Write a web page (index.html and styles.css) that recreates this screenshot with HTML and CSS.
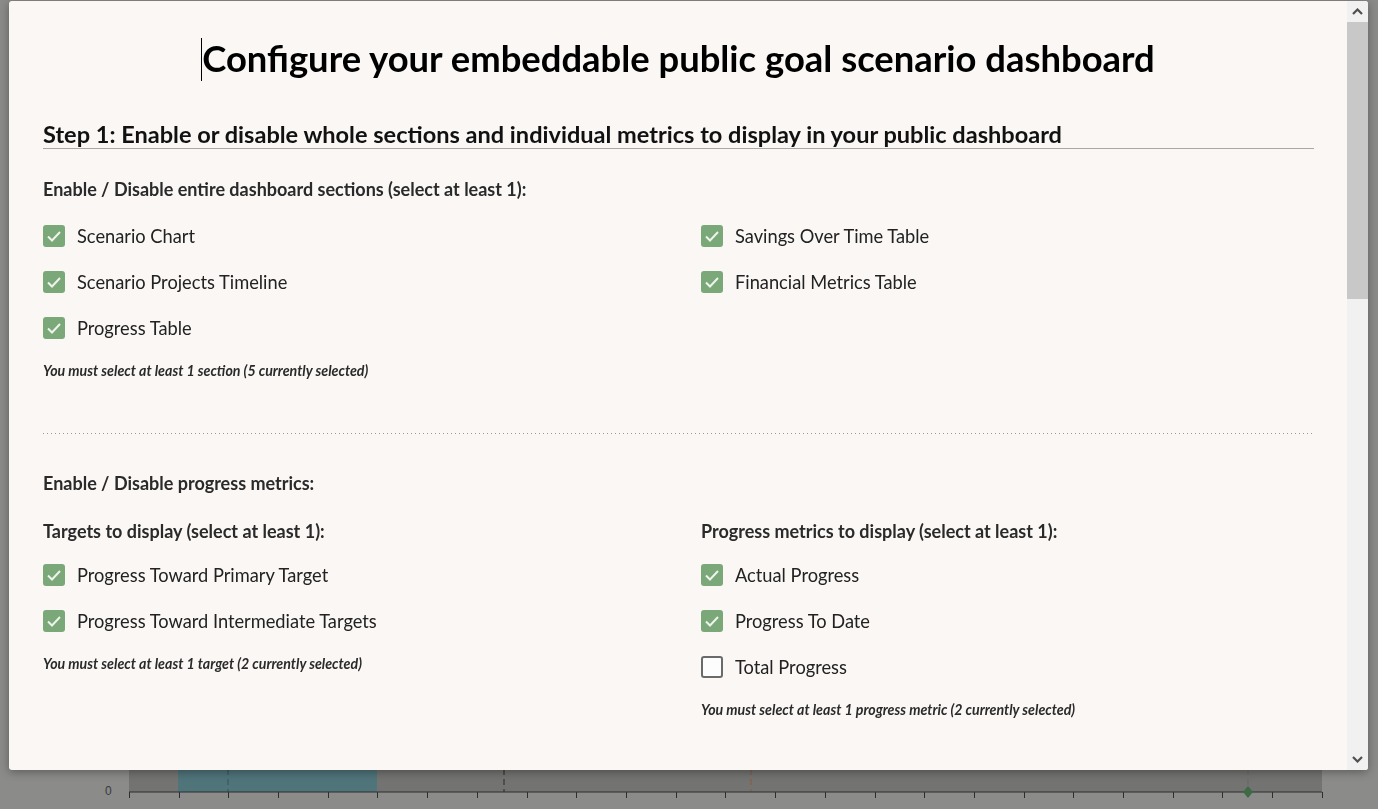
FILE: index.html
```html
<!DOCTYPE html>
<html>
<head>
  <title>Configure public dashboard</title>
  <link rel="stylesheet" href="styles.css">
</head>
<body>

<div class="page">
  <svg class="chart" width="1378" height="60" viewBox="0 0 1378 60">
    <rect x="0" y="0" width="1378" height="60" fill="#8b8b8a"/>
    <rect x="129" y="0" width="1193" height="43" fill="#737372"/>
    <rect x="178" y="0" width="199" height="43" fill="#4f747a"/>
    <line x1="228" y1="0" x2="228" y2="43" stroke="#3f5f64" stroke-width="1.5" stroke-dasharray="6 4"/>
    <line x1="504" y1="0" x2="504" y2="43" stroke="#2a2a2a" stroke-width="1" stroke-dasharray="6 4"/>
    <line x1="751" y1="0" x2="751" y2="43" stroke="#8c5a3c" stroke-width="1" stroke-dasharray="6 4"/>
    <line x1="1248" y1="0" x2="1248" y2="43" stroke="#686868" stroke-width="1" stroke-dasharray="6 4"/>
    <line x1="129" y1="43" x2="1322" y2="43" stroke="#2e2e2e" stroke-width="1.2"/>
    <g id="ticks" stroke="#2e2e2e" stroke-width="1"></g>
    <polygon points="1248,37 1253,43 1248,49 1243,43" fill="#3e6b45"/>
    <text x="105" y="46" font-family="Liberation Sans, sans-serif" font-size="12" fill="#3a3a3a">0</text>
  </svg>
</div>

<div class="modal">
  <div class="content">
    <h1><span class="caret"></span>Configure your embeddable public goal scenario dashboard</h1>

    <h2>Step 1: Enable or disable whole sections and individual metrics to display in your public dashboard</h2>

    <div class="label">Enable / Disable entire dashboard sections (select at least 1):</div>
    <div class="cols rows-top">
      <div>
        <div class="check on">Scenario Chart</div>
        <div class="check on">Scenario Projects Timeline</div>
        <div class="check on">Progress Table</div>
        <div class="note">You must select at least 1 section (5 currently selected)</div>
      </div>
      <div>
        <div class="check on">Savings Over Time Table</div>
        <div class="check on">Financial Metrics Table</div>
      </div>
    </div>

    <div class="dotted"></div>

    <div class="label metrics">Enable / Disable progress metrics:</div>
    <div class="cols">
      <div>
        <div class="label sub">Targets to display (select at least 1):</div>
        <div class="group">
          <div class="check on">Progress Toward Primary Target</div>
          <div class="check on">Progress Toward Intermediate Targets</div>
        </div>
        <div class="note">You must select at least 1 target (2 currently selected)</div>
      </div>
      <div>
        <div class="label sub">Progress metrics to display (select at least 1):</div>
        <div class="group">
          <div class="check on">Actual Progress</div>
          <div class="check on">Progress To Date</div>
          <div class="check">Total Progress</div>
        </div>
        <div class="note">You must select at least 1 progress metric (2 currently selected)</div>
      </div>
    </div>
  </div>

  <div class="scrollbar">
    <div class="arrow"><svg width="11" height="7" viewBox="0 0 11 7"><polyline points="1,6 5.5,1.5 10,6" fill="none" stroke="#505050" stroke-width="2.2"/></svg></div>
    <div class="thumb"></div>
    <div class="track"></div>
    <div class="arrow"><svg width="11" height="7" viewBox="0 0 11 7"><polyline points="1,1 5.5,5.5 10,1" fill="none" stroke="#505050" stroke-width="2.2"/></svg></div>
  </div>
</div>

<script>
  const ticks = document.getElementById('ticks');
  for (let x = 129; x <= 1323; x += 49.7) {
    const t = document.createElementNS('http://www.w3.org/2000/svg', 'line');
    t.setAttribute('x1', Math.round(x) + 0.5);
    t.setAttribute('x2', Math.round(x) + 0.5);
    t.setAttribute('y1', 43);
    t.setAttribute('y2', 49);
    ticks.appendChild(t);
  }

  const tick = '<svg width="22" height="22" viewBox="0 0 22 22"><polyline points="5,11.5 9,15.5 17,7" fill="none" stroke="#eef3ec" stroke-width="2"/></svg>';
  document.querySelectorAll('.check').forEach(el => {
    const box = document.createElement('span');
    box.className = 'box';
    if (el.classList.contains('on')) box.innerHTML = tick;
    el.prepend(box);
  });
</script>

</body>
</html>
```

FILE: styles.css
```css
html, body { margin: 0; height: 100%; overflow: hidden; }
body { background: #8b8b8a; font-family: Lato, "Open Sans", sans-serif; }

.page { height: 100vh; display: flex; flex-direction: column; justify-content: flex-end; }
.chart { display: block; }

.modal { position: fixed; left: 9px; top: 1px; width: 1359px; height: 769px; background: #faf7f5; border-radius: 3px; box-shadow: 0 2px 10px rgba(0,0,0,0.35); display: flex; overflow: hidden; }
.content { flex: 1; padding: 0 33px 0 34px; color: #222; }

h1 { margin: 35px 0 0; font-size: 36.4px; line-height: 44px; font-weight: 700; text-align: center; color: #000; }
.caret { display: inline-block; width: 1px; height: 43px; background: #000; vertical-align: -9px; margin-left: -1px; }

h2 { margin: 39px 0 0; font-size: 23.55px; line-height: 28px; font-weight: 700; color: #111; border-bottom: 1px solid #a8a8a8; }

.label { margin-top: 28px; font-size: 18px; line-height: 24px; font-weight: 700; color: #2a2a2a; }
.label.metrics { margin-top: 37px; }
.label.sub { margin-top: 24px; }

.cols { display: grid; grid-template-columns: 1fr 1fr; column-gap: 45px; }
.rows-top { margin-top: 12px; }
.group { margin-top: 9px; }

.check { height: 46px; display: flex; align-items: center; gap: 12px; font-size: 18.25px; color: #222; }
.box { width: 22px; height: 22px; box-sizing: border-box; border: 2px solid #6a6a6a; border-radius: 3px; background: #fdfdfd; flex: none; }
.check.on .box { border: none; background: #7aa878; }
.box svg { display: block; }

.note { margin-top: 11px; font-size: 14.2px; line-height: 18px; font-weight: 700; font-style: italic; color: #2a2a2a; }

.dotted { margin-top: 53px; height: 1px; background: repeating-linear-gradient(to right, #9a9a9a 0 1px, transparent 1px 4px); }

.scrollbar { width: 21px; background: #f1f1f1; display: flex; flex-direction: column; }
.arrow { height: 21px; display: flex; align-items: center; justify-content: center; }
.arrow svg { display: block; }
.thumb { height: 277px; background: #c8c8c8; }
.track { flex: 1; }
```
